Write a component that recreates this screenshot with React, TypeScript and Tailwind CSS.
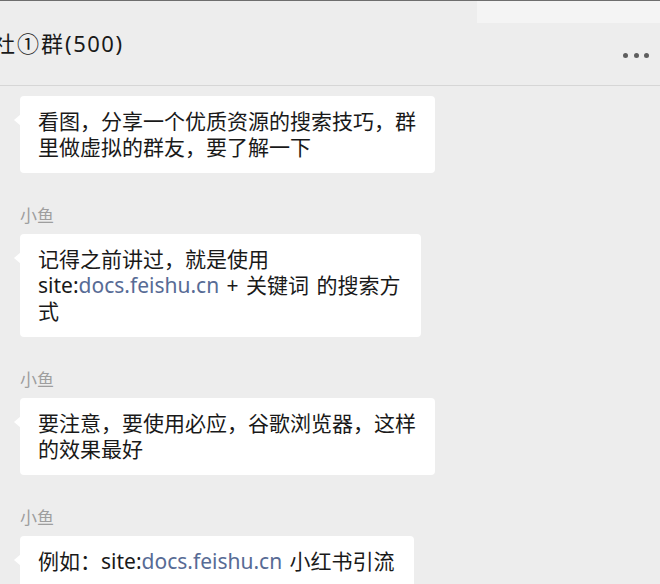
const FONT = "font-['Noto_Sans','Noto_Sans_CJK_SC',sans-serif]";

type Part = { text: string; link?: boolean };
type Message = { id: number; sender?: string; width?: string; parts: Part[] };

const messages: Message[] = [
    {
        id: 1,
        parts: [{ text: "看图，分享一个优质资源的搜索技巧，群里做虚拟的群友，要了解一下" }],
    },
    {
        id: 2,
        sender: "小鱼",
        width: "w-[401px]",
        parts: [
            { text: "记得之前讲过，就是使用 site:" },
            { text: "docs.feishu.cn", link: true },
            { text: " + 关键词 的搜索方式" },
        ],
    },
    {
        id: 3,
        sender: "小鱼",
        parts: [{ text: "要注意，要使用必应，谷歌浏览器，这样的效果最好" }],
    },
    {
        id: 4,
        sender: "小鱼",
        parts: [
            { text: "例如：site:" },
            { text: "docs.feishu.cn", link: true },
            { text: " 小红书引流" },
        ],
    },
];

const Bubble = ({ parts, width }: { parts: Part[]; width?: string }) => (
    <div
        className={`relative self-start ${width ?? ""} max-w-[415px] bg-white rounded-[4px] pl-[18px] pr-[19px] pt-[12px] pb-[13px] text-[21px] leading-[26px] text-[#191919] [word-spacing:2px]`}
    >
        <span className="absolute left-[-6px] top-[18px] w-0 h-0 border-y-[6px] border-y-transparent border-r-[7px] border-r-white"></span>
        {parts.map((p, i) =>
            p.link ? (
                <span key={i} className="text-[#576b95]">
                    {p.text}
                </span>
            ) : (
                <span key={i}>{p.text}</span>
            )
        )}
    </div>
);

const MessageItem = ({ message }: { message: Message }) => (
    <div className="flex flex-col">
        {message.sender && (
            <p className="text-[17px] leading-[22px] text-[#9e9e9e] mb-[7px]">{message.sender}</p>
        )}
        <Bubble parts={message.parts} width={message.width} />
    </div>
);

export default function App() {
    return (
        <div className={`${FONT} w-[660px] h-[584px] overflow-hidden bg-[#ededed] border-t border-[#6e6e6e]`}>
            <header className="h-[85px] border-b border-[#d6d6d6] flex flex-col">
                <div className="h-[22px] flex justify-end">
                    <div className="w-[183px] bg-[#f4f4f4]"></div>
                </div>
                <div className="flex justify-between overflow-hidden">
                    <h1 className="-ml-[7px] mt-[5px] text-[22px] leading-[30px] text-[#191919] whitespace-nowrap">
                        社<span className="mx-[2px]">①</span>群<span className="ml-[2px] tracking-[1.5px]">(500)</span>
                    </h1>
                    <div className="flex gap-[5.5px] mt-[30px] mr-[11px]">
                        <span className="w-[5px] h-[5px] rounded-full bg-[#5e5e5e]"></span>
                        <span className="w-[5px] h-[5px] rounded-full bg-[#5e5e5e]"></span>
                        <span className="w-[5px] h-[5px] rounded-full bg-[#5e5e5e]"></span>
                    </div>
                </div>
            </header>
            <main className="flex flex-col gap-[32px] pl-[20px] pt-[10px]">
                {messages.map((m) => (
                    <MessageItem key={m.id} message={m} />
                ))}
            </main>
        </div>
    );
}
